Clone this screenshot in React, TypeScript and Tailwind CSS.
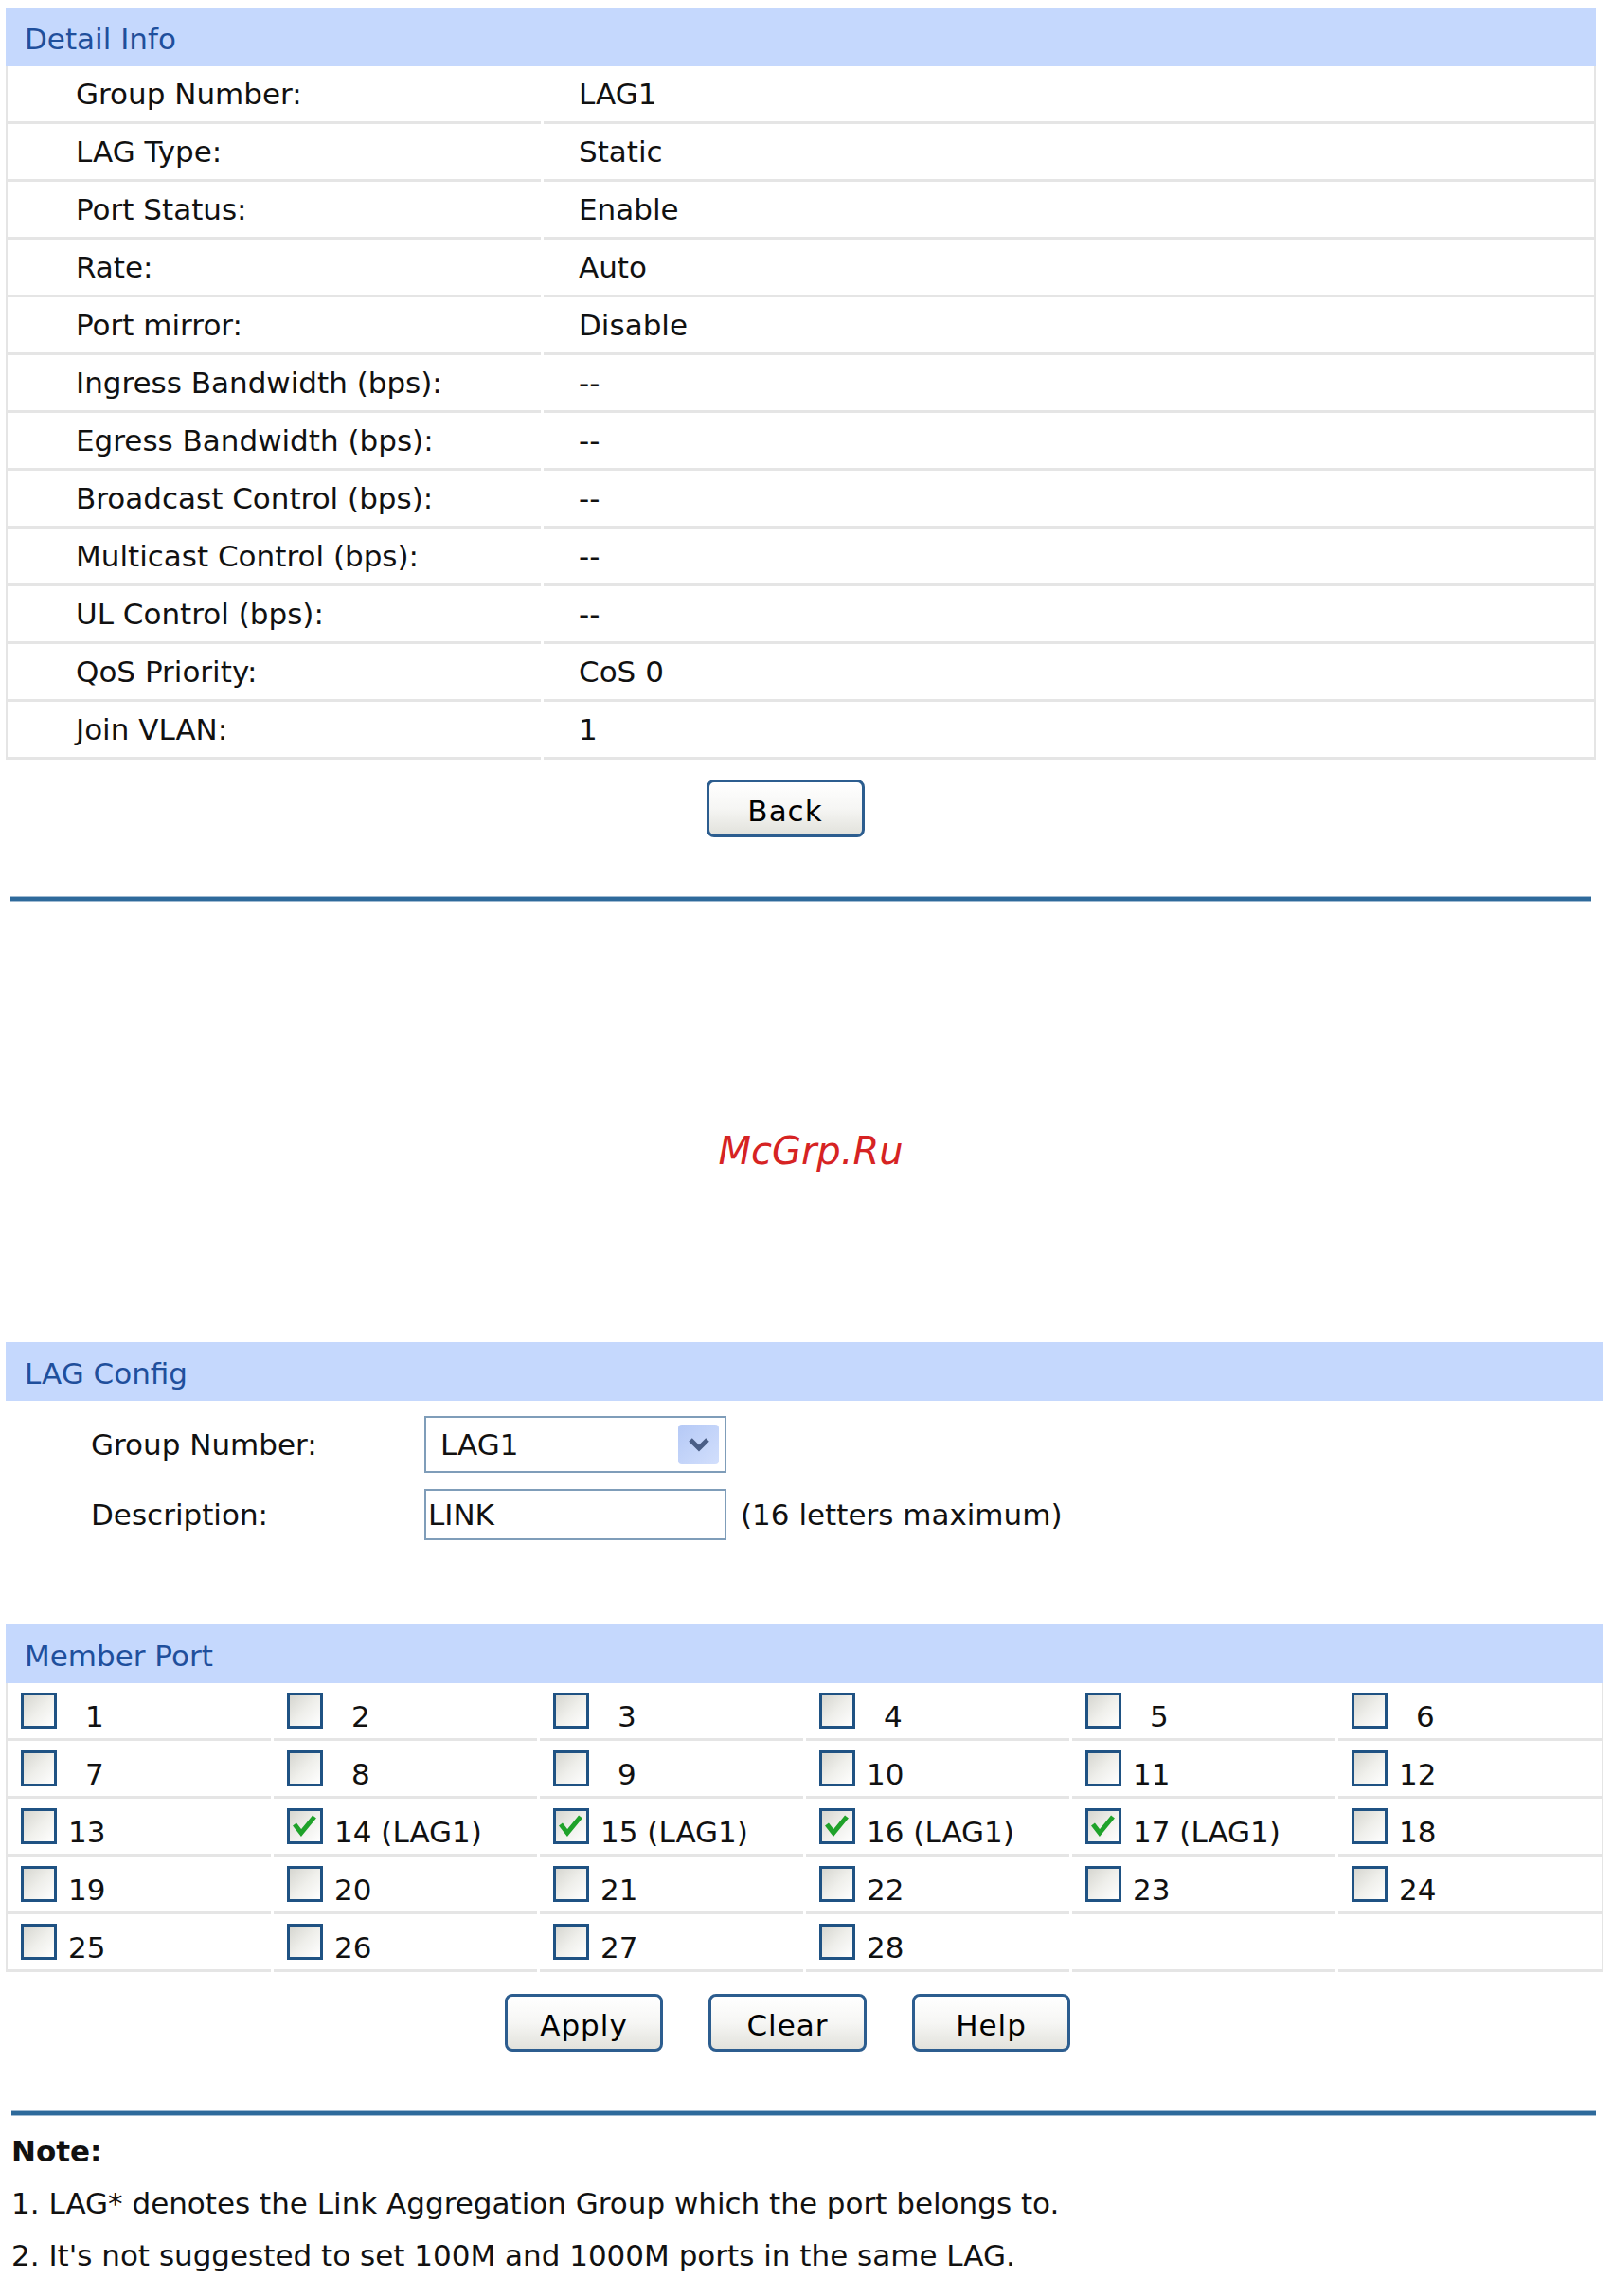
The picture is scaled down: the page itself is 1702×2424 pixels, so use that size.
import React from "react";

type Row = { label: string; value: string };

const detailRows: Row[] = [
    { label: "Group Number:", value: "LAG1" },
    { label: "LAG Type:", value: "Static" },
    { label: "Port Status:", value: "Enable" },
    { label: "Rate:", value: "Auto" },
    { label: "Port mirror:", value: "Disable" },
    { label: "Ingress Bandwidth (bps):", value: "--" },
    { label: "Egress Bandwidth (bps):", value: "--" },
    { label: "Broadcast Control (bps):", value: "--" },
    { label: "Multicast Control (bps):", value: "--" },
    { label: "UL Control (bps):", value: "--" },
    { label: "QoS Priority:", value: "CoS 0" },
    { label: "Join VLAN:", value: "1" },
];

const lagPorts = [14, 15, 16, 17];

const SectionTitle: React.FC<{ title: string }> = ({ title }) => (
    <div className="flex h-[62px] items-center bg-[#c5d8fd] pl-[20px] pt-[4px] text-[#1f4f9c]">{title}</div>
);

const Button: React.FC<{ label: string }> = ({ label }) => (
    <button className="h-[61px] w-[167px] rounded-[8px] border-[3px] border-[#2c5d8f] bg-linear-to-b from-white via-[#f6f6f4] to-[#e2e2dc] pt-[5px] text-black tracking-[1px]">
        {label}
    </button>
);

const Rule: React.FC<{ className: string }> = ({ className }) => (
    <div className={`h-[6px] border-y border-[#9fbad2] bg-[#2e6a9b] ${className}`} />
);

const CheckBox: React.FC<{ checked?: boolean }> = ({ checked }) => (
    <span className="inline-block h-[38px] w-[38px] shrink-0 border-[3px] border-[#1f5283] bg-linear-to-br from-[#d6d6d0] via-[#efefeb] to-white">
        {checked && (
            <svg viewBox="0 0 32 32" className="h-full w-full">
                <path d="M5 14 L12 23 L26 6" fill="none" stroke="#1fa22a" strokeWidth="5" strokeLinejoin="miter" />
            </svg>
        )}
    </span>
);

const PortCell: React.FC<{ port?: number }> = ({ port }) => (
    <div className="flex h-[61px] items-start border-b-[3px] border-[#e5e5e5] pl-[14px] pt-[10px]">
        {port !== undefined && (
            <>
                <CheckBox checked={lagPorts.includes(port)} />
                <span className={`ml-[12px] mt-[10px] leading-none ${port < 10 ? "pl-[18px]" : ""}`}>
                    {port}
                    {lagPorts.includes(port) && " (LAG1)"}
                </span>
            </>
        )}
    </div>
);

export default function App() {
    const ports: (number | undefined)[] = Array.from({ length: 30 }, (_, i) => (i < 28 ? i + 1 : undefined));

    return (
        <div className="h-[2424px] w-[1702px] overflow-hidden bg-white pt-[8px] font-['DejaVu_Sans',sans-serif] text-[31px] text-[#111]">
            {/* detail info table */}
            <div className="ml-[6px] w-[1679px]">
                <SectionTitle title="Detail Info" />
                <div className="border-x-2 border-[#e5e5e5]">
                    {detailRows.map((row) => (
                        <div key={row.label} className="grid h-[61px] grid-cols-[563px_1fr] gap-x-[3px]">
                            <div className="flex items-center border-b-[3px] border-[#e5e5e5] pl-[72px]">{row.label}</div>
                            <div className="flex items-center border-b-[3px] border-[#e5e5e5] pl-[37px]">{row.value}</div>
                        </div>
                    ))}
                </div>
            </div>
            <div className="mt-[21px] flex w-[1658px] justify-center">
                <Button label="Back" />
            </div>
            <Rule className="ml-[11px] mt-[62px] w-[1669px]" />

            <div className="mt-[243px] flex w-[1712px] justify-center">
                <span className="text-[40px] italic leading-none text-[#d62323]">McGrp.Ru</span>
            </div>

            {/* LAG config form */}
            <div className="ml-[6px] mt-[182px] w-[1687px]">
                <SectionTitle title="LAG Config" />
                <div className="mt-[16px] flex items-center pl-[90px]">
                    <span className="w-[352px]">Group Number:</span>
                    <div className="flex h-[60px] w-[319px] items-center justify-between border-2 border-[#7f9db9] pl-[15px] pr-[6px]">
                        <span>LAG1</span>
                        <span className="flex h-[42px] w-[43px] items-center justify-center rounded-[4px] bg-linear-to-br from-[#b5c9f6] to-[#d2dffc]">
                            <svg viewBox="0 0 24 16" className="h-[16px] w-[24px]">
                                <path d="M3 3 L12 12 L21 3" fill="none" stroke="#4a5e86" strokeWidth="5" />
                            </svg>
                        </span>
                    </div>
                </div>
                <div className="mt-[17px] flex items-center pl-[90px]">
                    <span className="w-[352px]">Description:</span>
                    <div className="flex h-[54px] w-[319px] items-center border-2 border-[#7f9db9] pl-[2px]">LINK</div>
                    <span className="ml-[15px]">(16 letters maximum)</span>
                </div>
            </div>

            {/* member port grid */}
            <div className="ml-[6px] mt-[89px] w-[1687px]">
                <SectionTitle title="Member Port" />
                <div className="grid grid-cols-6 gap-x-[3px] border-x-2 border-[#e5e5e5]">
                    {ports.map((p, i) => (
                        <PortCell key={i} port={p} />
                    ))}
                </div>
            </div>
            <div className="mt-[23px] flex w-[1663px] justify-center gap-[48px]">
                <Button label="Apply" />
                <Button label="Clear" />
                <Button label="Help" />
            </div>
            <Rule className="ml-[12px] mt-[62px] w-[1673px]" />

            <div className="ml-[12px] mt-[10px] leading-[55px]">
                <p className="font-bold">Note:</p>
                <p>1. LAG* denotes the Link Aggregation Group which the port belongs to.</p>
                <p>2. It's not suggested to set 100M and 1000M ports in the same LAG.</p>
            </div>
        </div>
    );
}
